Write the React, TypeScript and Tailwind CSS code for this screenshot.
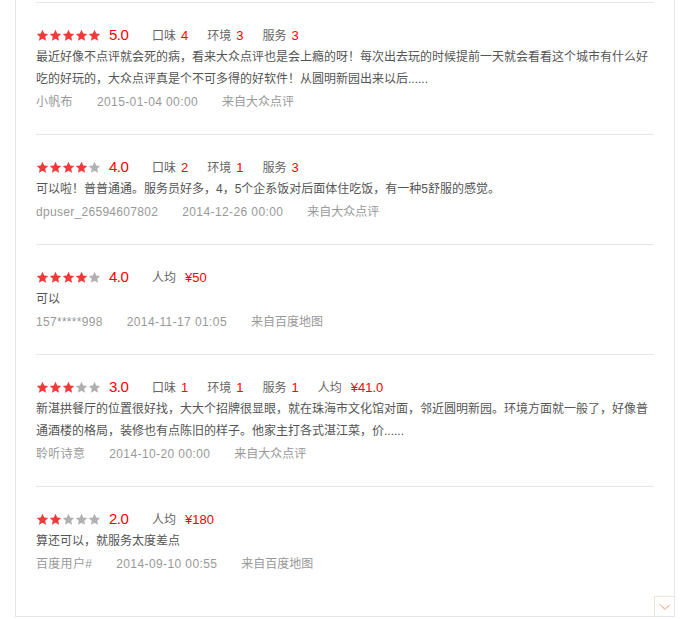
import React from "react";

type Score = { label: string; value: string; price?: boolean };
type Review = {
  stars: number;
  rating: string;
  scores: Score[];
  text: string;
  user: string;
  date: string;
  source: string;
};

const reviews: Review[] = [
  {
    stars: 5,
    rating: "5.0",
    scores: [
      { label: "口味", value: "4" },
      { label: "环境", value: "3" },
      { label: "服务", value: "3" },
    ],
    text: "最近好像不点评就会死的病，看来大众点评也是会上瘾的呀！每次出去玩的时候提前一天就会看看这个城市有什么好吃的好玩的，大众点评真是个不可多得的好软件！从圆明新园出来以后......",
    user: "小帆布",
    date: "2015-01-04 00:00",
    source: "来自大众点评",
  },
  {
    stars: 4,
    rating: "4.0",
    scores: [
      { label: "口味", value: "2" },
      { label: "环境", value: "1" },
      { label: "服务", value: "3" },
    ],
    text: "可以啦！普普通通。服务员好多，4，5个企系饭对后面体住吃饭，有一种5舒服的感觉。",
    user: "dpuser_26594607802",
    date: "2014-12-26 00:00",
    source: "来自大众点评",
  },
  {
    stars: 4,
    rating: "4.0",
    scores: [{ label: "人均", value: "¥50", price: true }],
    text: "可以",
    user: "157*****998",
    date: "2014-11-17 01:05",
    source: "来自百度地图",
  },
  {
    stars: 3,
    rating: "3.0",
    scores: [
      { label: "口味", value: "1" },
      { label: "环境", value: "1" },
      { label: "服务", value: "1" },
      { label: "人均", value: "¥41.0", price: true },
    ],
    text: "新湛拱餐厅的位置很好找，大大个招牌很显眼，就在珠海市文化馆对面，邻近圆明新园。环境方面就一般了，好像普通酒楼的格局，装修也有点陈旧的样子。他家主打各式湛江菜，价......",
    user: "聆听诗意",
    date: "2014-10-20 00:00",
    source: "来自大众点评",
  },
  {
    stars: 2,
    rating: "2.0",
    scores: [{ label: "人均", value: "¥180", price: true }],
    text: "算还可以，就服务太度差点",
    user: "百度用户#",
    date: "2014-09-10 00:55",
    source: "来自百度地图",
  },
];

function Star({ on }: { on: boolean }) {
  return (
    <svg width="13" height="13" viewBox="0 0 24 24" className="block">
      <path
        d="M12 1.5l3.2 6.9 7.3.8-5.5 5 1.6 7.4L12 17.8l-6.6 3.8L7 14.2 1.5 9.2l7.3-.8L12 1.5z"
        fill={on ? "#f23a3a" : "#b0b0b0"}
      />
    </svg>
  );
}

function ReviewItem({ r }: { r: Review }) {
  return (
    <div className="border-t border-[#e6e6e6] pt-[21px] pb-[20px]">
      <div className="flex h-[22px] items-center">
        <div className="flex">
          {[0, 1, 2, 3, 4].map((i) => (
            <Star key={i} on={i < r.stars} />
          ))}
        </div>
        <span className="ml-[8px] w-[43px] text-[15px] tracking-[-0.5px] text-[#ff0000] leading-[22px]">
          {r.rating}
        </span>
        <div className="flex items-center gap-[19px] text-[12px] leading-[22px] pt-[2px]">
          {r.scores.map((s) => (
            <span key={s.label} className="flex items-center">
              <span className="text-[#666]">{s.label}</span>
              <span
                className={
                  (s.price ? "ml-[9px]" : "ml-[5px]") +
                  " text-[13px] text-[#ff0000]"
                }
              >
                {s.value}
              </span>
            </span>
          ))}
        </div>
      </div>
      <p className="text-[12px] leading-[22px] text-[#555]">{r.text}</p>
      <div className="mt-[1px] flex gap-[24px] text-[12px] leading-[23px] text-[#999]">
        <span className="tracking-[0.3px]">{r.user}</span>
        <span className="tracking-[0.4px]">{r.date}</span>
        <span>{r.source}</span>
      </div>
    </div>
  );
}

export default function App() {
  return (
    <div
      className="w-[688px] h-[619px] bg-white"
      style={{ fontFamily: '"Liberation Sans", "Noto Sans CJK SC", sans-serif' }}
    >
      <div className="relative ml-[15px] w-[660px] border-x border-b border-[#e6e6e6] pt-[2px] pb-[20px]">
        <div className="px-[20px]">
          {reviews.map((r, i) => (
            <ReviewItem key={i} r={r} />
          ))}
        </div>
        <div className="absolute right-0 bottom-0 flex h-[20px] w-[20px] items-center justify-center border-l border-t border-[#f3e4da] bg-white">
          <svg width="12" height="8" viewBox="0 0 12 8">
            <polyline
              points="1,1.5 6,6.5 11,1.5"
              fill="none"
              stroke="#f26a10"
              strokeWidth="1"
              strokeDasharray="1.2 0.6"
            />
          </svg>
        </div>
      </div>
    </div>
  );
}
